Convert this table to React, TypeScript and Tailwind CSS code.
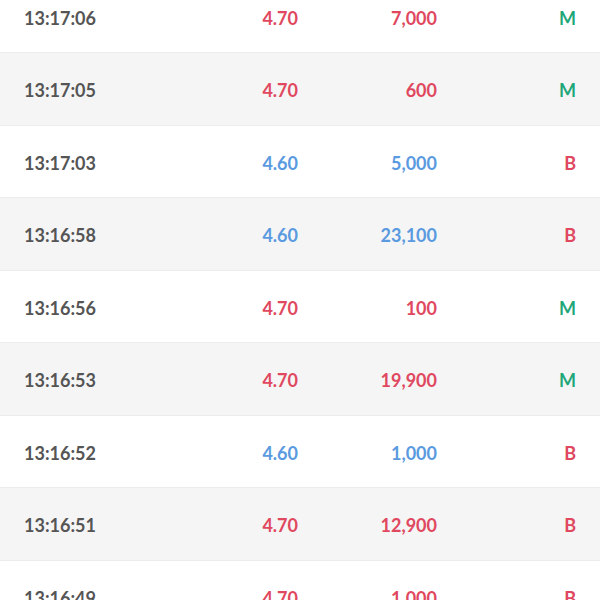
import React from "react";

type Trade = {
  time: string;
  price: string;
  volume: string;
  side: "M" | "B";
  up: boolean;
};

const trades: Trade[] = [
  { time: "13:17:06", price: "4.70", volume: "7,000", side: "M", up: true },
  { time: "13:17:05", price: "4.70", volume: "600", side: "M", up: true },
  { time: "13:17:03", price: "4.60", volume: "5,000", side: "B", up: false },
  { time: "13:16:58", price: "4.60", volume: "23,100", side: "B", up: false },
  { time: "13:16:56", price: "4.70", volume: "100", side: "M", up: true },
  { time: "13:16:53", price: "4.70", volume: "19,900", side: "M", up: true },
  { time: "13:16:52", price: "4.60", volume: "1,000", side: "B", up: false },
  { time: "13:16:51", price: "4.70", volume: "12,900", side: "B", up: true },
  { time: "13:16:49", price: "4.70", volume: "1,000", side: "B", up: true },
];

const App: React.FC = () => {
  return (
    <div className="w-[600px] h-[600px] overflow-hidden bg-white font-['Lato','Liberation_Sans',sans-serif]">
      <div className="mt-[-19.5px] flex flex-col">
        {trades.map((item, idx) => (
          <div
            key={idx}
            className={`flex items-center h-[72.5px] shrink-0 pt-1 pl-6 pr-6 text-[18px] font-bold border-b border-[#ececec] ${
              idx % 2 === 1 ? "bg-[#f5f5f5]" : "bg-white"
            }`}
          >
            <div className="w-[178px] text-[#555555]">{item.time}</div>
            <div
              className={`w-[96px] text-right ${
                item.up ? "text-[#e0485f]" : "text-[#5a9ae0]"
              }`}
            >
              {item.price}
            </div>
            <div
              className={`w-[139px] text-right ${
                item.up ? "text-[#e0485f]" : "text-[#5a9ae0]"
              }`}
            >
              {item.volume}
            </div>
            <div
              className={`flex-1 text-right ${
                item.side === "M" ? "text-[#1fa77a]" : "text-[#e0485f]"
              }`}
            >
              {item.side}
            </div>
          </div>
        ))}
      </div>
    </div>
  );
};

export default App;
